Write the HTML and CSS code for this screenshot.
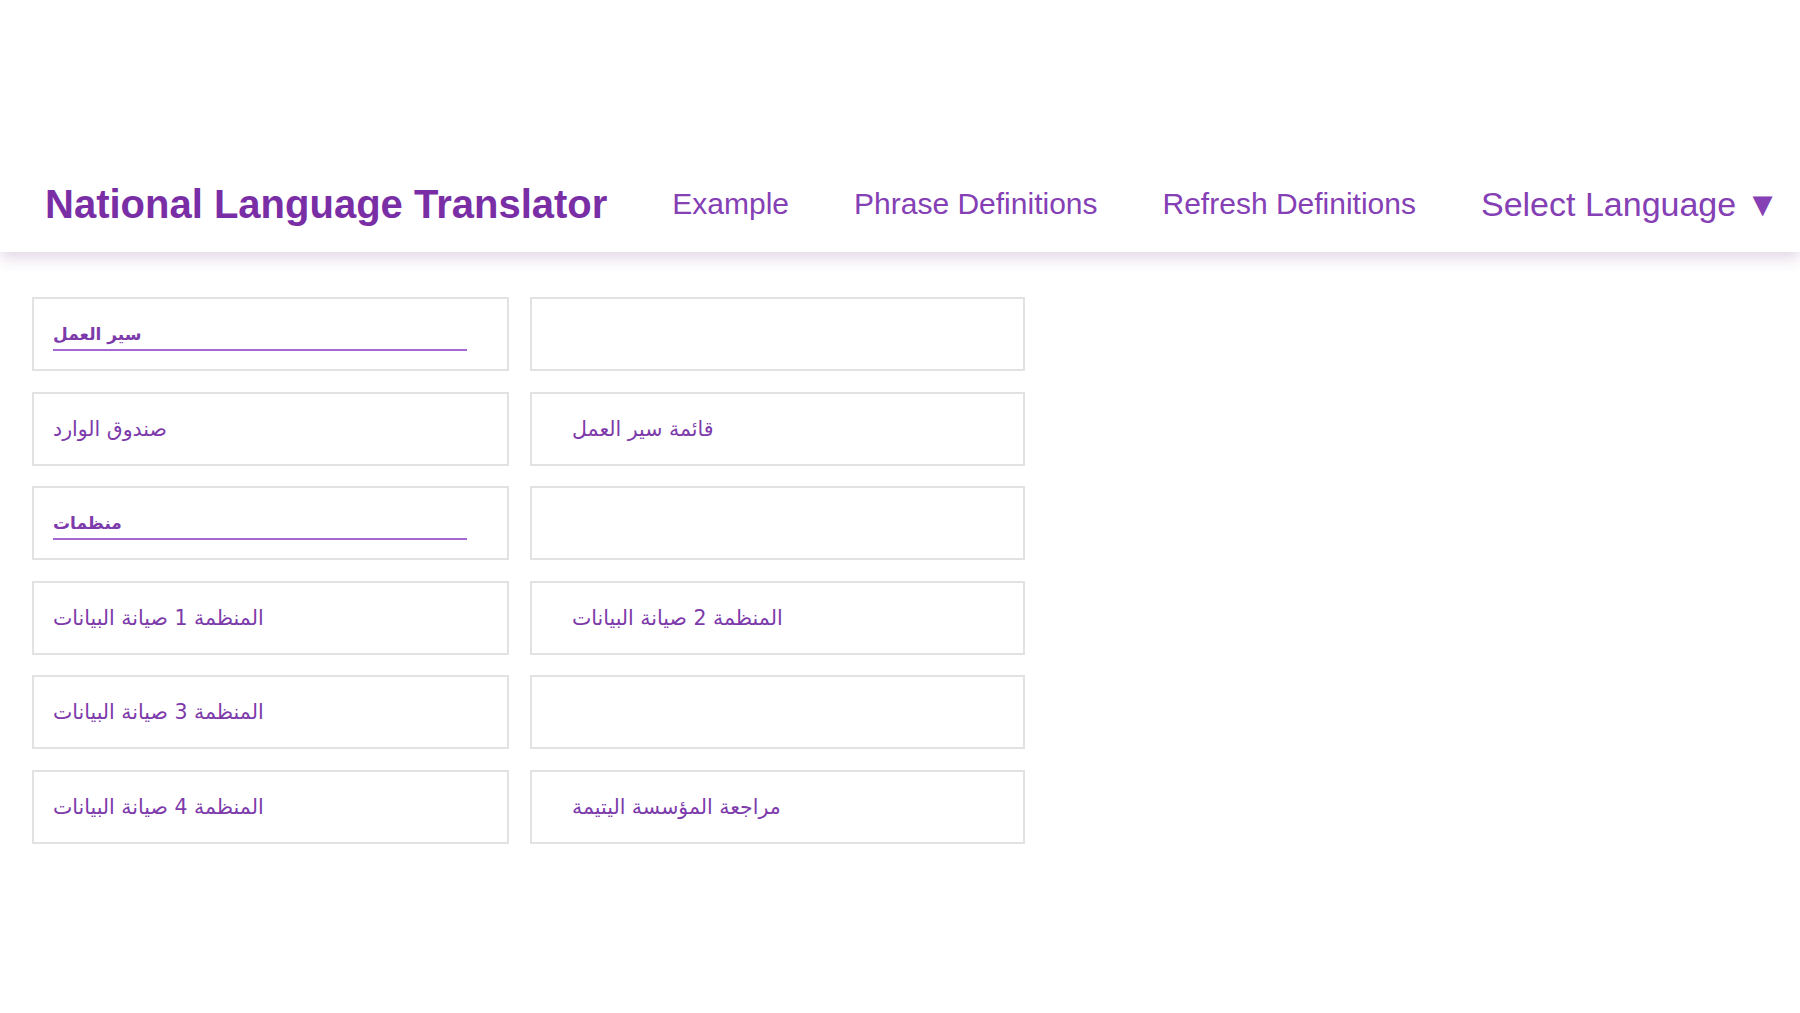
FILE: index.html
```html
<!DOCTYPE html>
<html lang="en">

<head>
    <meta charset="UTF-8">
    <meta name="viewport" content="width=device-width, initial-scale=1.0">
    <title>National Language Translator</title>
    <link rel="stylesheet" href="styles.css">
</head>

<body>
    <header class="topbar">
        <h1 class="brand">National Language Translator</h1>
        <nav class="nav">
            <a href="#" class="nav-link">Example</a>
            <a href="#" class="nav-link">Phrase Definitions</a>
            <a href="#" class="nav-link">Refresh Definitions</a>
            <a href="#" class="nav-link lang">Select Language &#9660;</a>
        </nav>
    </header>

    <main class="grid">
        <div class="cell left"><span class="heading" dir="rtl">سير العمل</span></div>
        <div class="cell right"></div>

        <div class="cell left"><span dir="rtl">صندوق الوارد</span></div>
        <div class="cell right"><span dir="rtl">قائمة سير العمل</span></div>

        <div class="cell left"><span class="heading" dir="rtl">منظمات</span></div>
        <div class="cell right"></div>

        <div class="cell left"><span dir="rtl">المنظمة 1 صيانة البيانات</span></div>
        <div class="cell right"><span dir="rtl">المنظمة 2 صيانة البيانات</span></div>

        <div class="cell left"><span dir="rtl">المنظمة 3 صيانة البيانات</span></div>
        <div class="cell right"></div>

        <div class="cell left"><span dir="rtl">المنظمة 4 صيانة البيانات</span></div>
        <div class="cell right"><span dir="rtl">مراجعة المؤسسة اليتيمة</span></div>
    </main>
</body>

</html>
```

FILE: styles.css
```css
body {
    margin: 0;
    font-family: "Liberation Sans", Arial, sans-serif;
    background-color: #fff;
}

.topbar {
    display: flex;
    align-items: center;
    gap: 65px;
    height: 96px;
    padding: 156px 0 0 45px;
    background-color: #fff;
    box-shadow: 0 6px 14px rgba(110, 50, 130, 0.2);
    position: relative;
}

.brand {
    margin: 0;
    font-size: 40px;
    font-weight: bold;
    color: #7a2ea6;
}

.nav {
    display: flex;
    align-items: center;
    gap: 65px;
}

.nav-link {
    font-size: 30px;
    color: #8440b4;
    text-decoration: none;
}

.lang {
    font-size: 34px;
}

.grid {
    display: grid;
    grid-template-columns: 477px 495px;
    grid-auto-rows: 74px;
    column-gap: 21px;
    row-gap: 20.5px;
    margin: 45px 0 0 32px;
}

.cell {
    box-sizing: border-box;
    border: 2px solid #e2e2e2;
    display: flex;
    align-items: center;
    font-family: "DejaVu Sans", sans-serif;
    font-size: 20.5px;
    color: #7d3aaa;
}

.left {
    padding-left: 19px;
}

.right {
    padding-left: 40px;
}

.heading {
    display: block;
    width: 414px;
    font-size: 17px;
    font-weight: bold;
    text-align: left;
    border-bottom: 2px solid #a468d2;
    padding-bottom: 5px;
    margin-top: 6px;
}
```
